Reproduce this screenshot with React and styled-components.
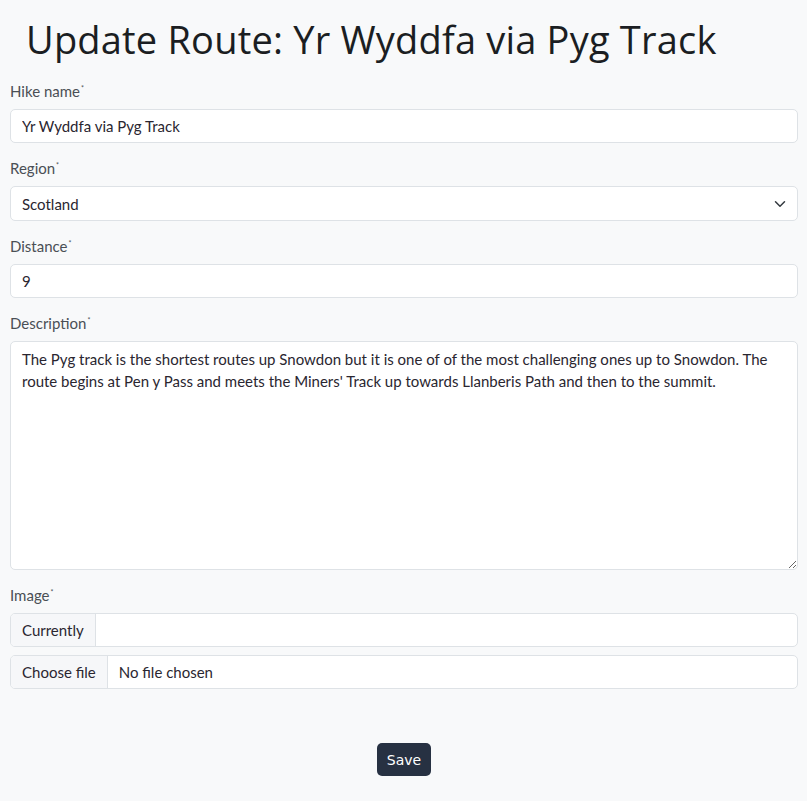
import React from "react";
import styled, { createGlobalStyle } from "styled-components";

const Global = createGlobalStyle`
  html, body { margin: 0; padding: 0; background: #f8f9fa; }
  body { font-family: Lato, "Noto Sans", sans-serif; color: #212529; }
  * { box-sizing: border-box; }
`;

const Page = styled.div`
  min-height: 801px;
  padding: 0 9px 0 10px;
  display: flex;
  flex-direction: column;
`;

const Title = styled.h1`
  margin: 12px 0 0 16px;
  font-family: "Open Sans", "Noto Sans", sans-serif;
  font-weight: 500;
  font-size: 38px;
  line-height: 54px;
  color: #1b1e22;
  letter-spacing: 0.2px;
`;

const Form = styled.form`
  display: flex;
  flex-direction: column;
  margin-top: 12px;
`;

const Group = styled.div`
  display: flex;
  flex-direction: column;
  gap: 8px;
  margin-bottom: 12px;
`;

const Label = styled.label`
  font-size: 15px;
  line-height: 20px;
  color: #4a4f55;
`;

const Star = styled.sup`
  font-size: 7px;
  vertical-align: 6px;
  margin-left: 1px;
`;

const Input = styled.input`
  height: 34px;
  width: 100%;
  padding: 0 11px;
  border: 1px solid #dee2e6;
  border-radius: 5px;
  background: #fff;
  font: inherit;
  font-size: 15px;
  color: #2a2630;
  outline: none;
`;

const SelectWrap = styled.div`
  height: 35px;
  border: 1px solid #dee2e6;
  border-radius: 5px;
  background: #fff;
  display: flex;
  align-items: center;
  justify-content: space-between;
  padding: 0 11px;
  font-size: 15px;
  color: #2a2630;
`;

const TextArea = styled.textarea`
  height: 229px;
  width: 100%;
  padding: 6px 11px;
  border: 1px solid #dee2e6;
  border-radius: 5px;
  background: #fff;
  font: inherit;
  font-size: 15px;
  line-height: 22px;
  color: #2a2630;
  resize: vertical;
  outline: none;
`;

const InputGroup = styled.div`
  display: flex;
  height: 34px;
  border: 1px solid #dee2e6;
  border-radius: 5px;
  background: #fff;
  overflow: hidden;
`;

const Addon = styled.span`
  display: flex;
  align-items: center;
  padding: 0 11px;
  background: #f6f7f9;
  border-right: 1px solid #dee2e6;
  font-size: 15px;
  color: #2a2630;
`;

const AddonText = styled.span`
  display: flex;
  align-items: center;
  padding: 0 11px;
  font-size: 15px;
  color: #2a2630;
`;

const Stack = styled.div`
  display: flex;
  flex-direction: column;
  gap: 8px;
`;

const Actions = styled.div`
  display: flex;
  justify-content: center;
  margin-top: 42px;
`;

const Button = styled.button`
  height: 33px;
  padding: 0 10px;
  border: none;
  border-radius: 5px;
  background: #273142;
  color: #fff;
  font-family: "DejaVu Sans", Verdana, sans-serif;
  font-size: 14px;
`;

const Chevron = () => (
  <svg width="12" height="12" viewBox="0 0 16 16" fill="none">
    <path d="M2 5l6 6 6-6" stroke="#343a40" strokeWidth="2" strokeLinecap="round" strokeLinejoin="round" />
  </svg>
);

const description =
  "The Pyg track is the shortest routes up Snowdon but it is one of of the most challenging ones up to Snowdon. The route begins at Pen y Pass and meets the Miners' Track up towards Llanberis Path and then to the summit.";

export default function App() {
  return (
    <>
      <Global />
      <Page>
        <Title>Update Route: Yr Wyddfa via Pyg Track</Title>
        <Form onSubmit={(e) => e.preventDefault()}>
          <Group>
            <Label>Hike name<Star>*</Star></Label>
            <Input defaultValue="Yr Wyddfa via Pyg Track" />
          </Group>
          <Group>
            <Label>Region<Star>*</Star></Label>
            <SelectWrap>
              <span>Scotland</span>
              <Chevron />
            </SelectWrap>
          </Group>
          <Group>
            <Label>Distance<Star>*</Star></Label>
            <Input defaultValue="9" />
          </Group>
          <Group>
            <Label>Description<Star>*</Star></Label>
            <TextArea defaultValue={description} />
          </Group>
          <Group>
            <Label>Image<Star>*</Star></Label>
            <Stack>
              <InputGroup>
                <Addon>Currently</Addon>
              </InputGroup>
              <InputGroup>
                <Addon>Choose file</Addon>
                <AddonText>No file chosen</AddonText>
              </InputGroup>
            </Stack>
          </Group>
          <Actions>
            <Button type="submit">Save</Button>
          </Actions>
        </Form>
      </Page>
    </>
  );
}
